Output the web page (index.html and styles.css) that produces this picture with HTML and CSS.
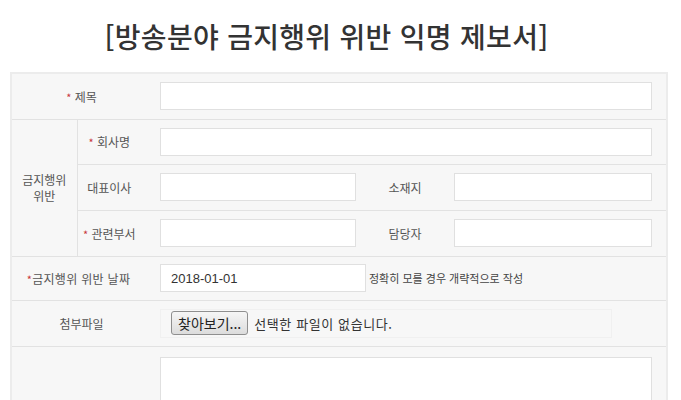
FILE: index.html
```html
<!DOCTYPE html>
<html lang="ko">
<head>
  <meta charset="UTF-8">
  <meta name="viewport" content="width=device-width, initial-scale=1.0">
  <title>방송분야 금지행위 위반 익명 제보서</title>
  <link rel="stylesheet" href="styles.css">
</head>
<body>

  <div class="wrap">
    <h2 class="title">[방송분야 금지행위 위반 익명 제보서]</h2>

    <form id="reportForm">
      <table class="report">
        <colgroup>
          <col class="c1">
          <col class="c2">
          <col class="c3">
          <col class="c4">
          <col class="c5">
        </colgroup>
        <tr>
          <th colspan="2"><span class="req">*</span> 제목</th>
          <td colspan="3" class="full"><input type="text" name="title"></td>
        </tr>
        <tr class="short">
          <th rowspan="3" class="group">금지행위<br>위반</th>
          <th class="sub"><span class="req">*</span> 회사명</th>
          <td colspan="3" class="full"><input type="text" name="company"></td>
        </tr>
        <tr>
          <th class="sub">대표이사</th>
          <td class="half"><input type="text" name="ceo"></td>
          <th>소재지</th>
          <td class="half last"><input type="text" name="address"></td>
        </tr>
        <tr>
          <th class="sub"><span class="req">*</span> 관련부서</th>
          <td class="half"><input type="text" name="dept"></td>
          <th>담당자</th>
          <td class="half last"><input type="text" name="manager"></td>
        </tr>
        <tr class="shorter">
          <th colspan="2" class="wide"><span class="req">*</span>금지행위 위반 날짜</th>
          <td colspan="3" class="full">
            <div class="date-row">
              <input type="text" name="date" class="date" value="2018-01-01">
              <span class="note">정확히 모를 경우 개략적으로 작성</span>
            </div>
          </td>
        </tr>
        <tr>
          <th colspan="2">첨부파일</th>
          <td colspan="3" class="full">
            <div class="file-box">
              <button type="button" class="file-btn">찾아보기...</button>
              <span class="file-name">선택한 파일이 없습니다.</span>
            </div>
          </td>
        </tr>
        <tr>
          <th colspan="2"></th>
          <td colspan="3" class="full"><textarea name="content"></textarea></td>
        </tr>
      </table>
    </form>
  </div>

</body>
</html>
```

FILE: styles.css
```css
body {
  font-family: "Noto Sans CJK KR", "Noto Sans", sans-serif;
  background-color: #fff;
  margin: 0;
  padding: 0;
  color: #555;
}
.wrap {
  width: 656px;
  margin-left: 10px;
}
.title {
  margin: 0;
  padding: 17px 23px 0 0;
  height: 72px;
  box-sizing: border-box;
  text-align: center;
  font-size: 28px;
  font-weight: 500;
  line-height: 38px;
  color: #333;
  letter-spacing: 0.3px;
}
.report {
  width: 656px;
  border-collapse: collapse;
  table-layout: fixed;
  background-color: #f7f7f7;
  border: 2px solid #ececec;
}
.c1 { width: 66px; }
.c2 { width: 74px; }
.c3 { width: 215px; }
.c4 { width: 78px; }
.c5 { width: 223px; }
.report tr {
  height: 46px;
}
.report tr.short {
  height: 45px;
}
.report tr.shorter {
  height: 44px;
}
.report th,
.report td {
  border-top: 1px solid #e2e2e2;
  padding: 0;
  vertical-align: middle;
}
.report th {
  font-size: 12px;
  font-weight: normal;
  color: #555;
  text-align: center;
}
.report th.sub {
  padding-right: 10px;
}
.report th.wide {
  padding-right: 6px;
  letter-spacing: 0.3px;
}
.report th.group {
  border-right: 1px solid #e2e2e2;
  line-height: 16px;
}
.req {
  color: #c8363a;
  font-size: 11px;
}
.report td.full {
  padding: 0 14px 0 9px;
}
.report td.half {
  padding: 0 10px 0 9px;
}
.report td.half.last {
  padding: 0 14px 0 10px;
}
input {
  display: block;
  width: 100%;
  height: 28px;
  padding: 0 10px;
  border: 1px solid #e0e0e0;
  background-color: #fff;
  box-sizing: border-box;
  font-family: "Liberation Sans", Arial, sans-serif;
  font-size: 13px;
  color: #333;
}
.date-row {
  display: flex;
  align-items: center;
  gap: 3px;
}
.date-row input.date {
  width: 206px;
  flex: none;
}
.note {
  font-size: 11px;
  color: #444;
  white-space: nowrap;
}
.file-box {
  display: flex;
  align-items: center;
  width: 452px;
  height: 29px;
  padding: 0 0 0 10px;
  border: 1px solid #f0f0f0;
  box-sizing: border-box;
}
.file-btn {
  height: 24px;
  padding: 0 6px;
  border: 1px solid #8f8f8f;
  border-radius: 3px;
  background: linear-gradient(#f6f6f6, #dcdcdc);
  font-family: "Noto Sans CJK KR", sans-serif;
  font-size: 14px;
  color: #222;
  line-height: 20px;
}
.file-name {
  margin-left: 6px;
  font-size: 13px;
  color: #333;
  letter-spacing: 0.6px;
}
textarea {
  display: block;
  width: 100%;
  height: 120px;
  margin: 10px 0;
  border: 1px solid #e0e0e0;
  background-color: #fff;
  box-sizing: border-box;
  resize: none;
}
```
